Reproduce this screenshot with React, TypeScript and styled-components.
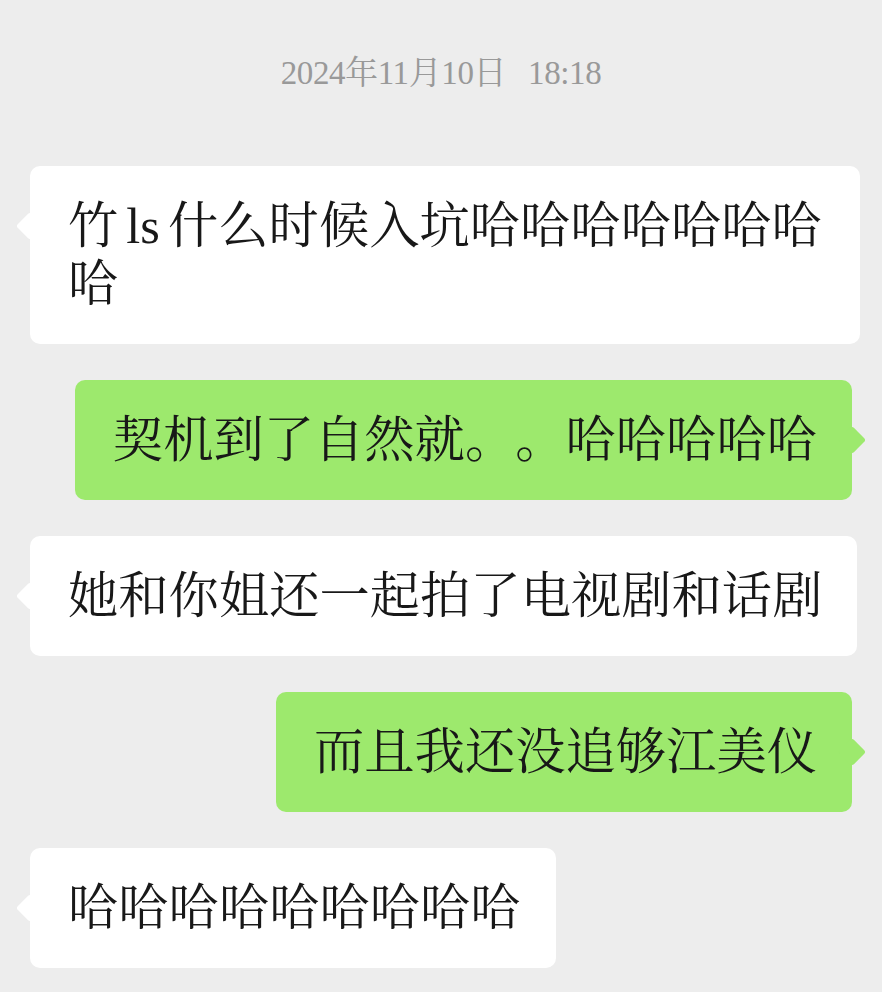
import styled, { createGlobalStyle, css } from 'styled-components';

/* ---- page ---- */

const GlobalStyle = createGlobalStyle`
  html, body {
    margin: 0;
    padding: 0;
    background: #ededed;
  }
`;

const Screen = styled.div`
  display: flex;
  flex-direction: column;
  gap: 36px;
  min-height: 992px;
  box-sizing: border-box;
  padding-top: 52px;
  background: #ededed;
  font-family: 'Liberation Serif', 'Noto Serif CJK SC', 'Noto Sans CJK SC', serif;
  text-spacing-trim: space-all;
`;

/* ---- time divider ---- */

const TimeStamp = styled.div`
  display: flex;
  justify-content: center;
  gap: 22px;
  margin-bottom: 36px;
  font-size: 33px;
  line-height: 42px;
  letter-spacing: -0.4px;
  color: #999999;
`;

/* ---- messages ---- */

type Side = 'left' | 'right';

const Row = styled.div<{ $side: Side }>`
  display: flex;
  justify-content: ${({ $side }) => ($side === 'left' ? 'flex-start' : 'flex-end')};
  padding: ${({ $side }) => ($side === 'left' ? '0 0 0 30px' : '0 30px 0 0')};
`;

const Bubble = styled.div<{ $side: Side }>`
  position: relative;
  max-width: 830px;
  box-sizing: border-box;
  padding: 31px 35px 31px 38px;
  border-radius: 10px;
  background: ${({ $side }) => ($side === 'left' ? '#ffffff' : '#9de96d')};
  color: #181818;
  font-size: 50.3px;
  line-height: 58px;
  word-spacing: -4.5px;

  &::before {
    content: '';
    position: absolute;
    top: 50px;
    width: 20px;
    height: 20px;
    border-radius: 3px;
    background: inherit;
    transform: rotate(45deg);
    ${({ $side }) =>
      $side === 'left'
        ? css`
            left: -10px;
          `
        : css`
            right: -10px;
          `}
  }
`;

const messages: { side: Side; text: string }[] = [
  { side: 'left', text: '竹 ls 什么时候入坑哈哈哈哈哈哈哈哈' },
  { side: 'right', text: '契机到了自然就。。哈哈哈哈哈' },
  { side: 'left', text: '她和你姐还一起拍了电视剧和话剧' },
  { side: 'right', text: '而且我还没追够江美仪' },
  { side: 'left', text: '哈哈哈哈哈哈哈哈哈' },
];

const App = () => {
  return (
    <>
      <GlobalStyle />
      <Screen>
        <TimeStamp>
          <span>2024年11月10日</span>
          <span>18:18</span>
        </TimeStamp>
        {messages.map((m, i) => (
          <Row key={i} $side={m.side}>
            <Bubble $side={m.side}>{m.text}</Bubble>
          </Row>
        ))}
      </Screen>
    </>
  );
};

export default App;
